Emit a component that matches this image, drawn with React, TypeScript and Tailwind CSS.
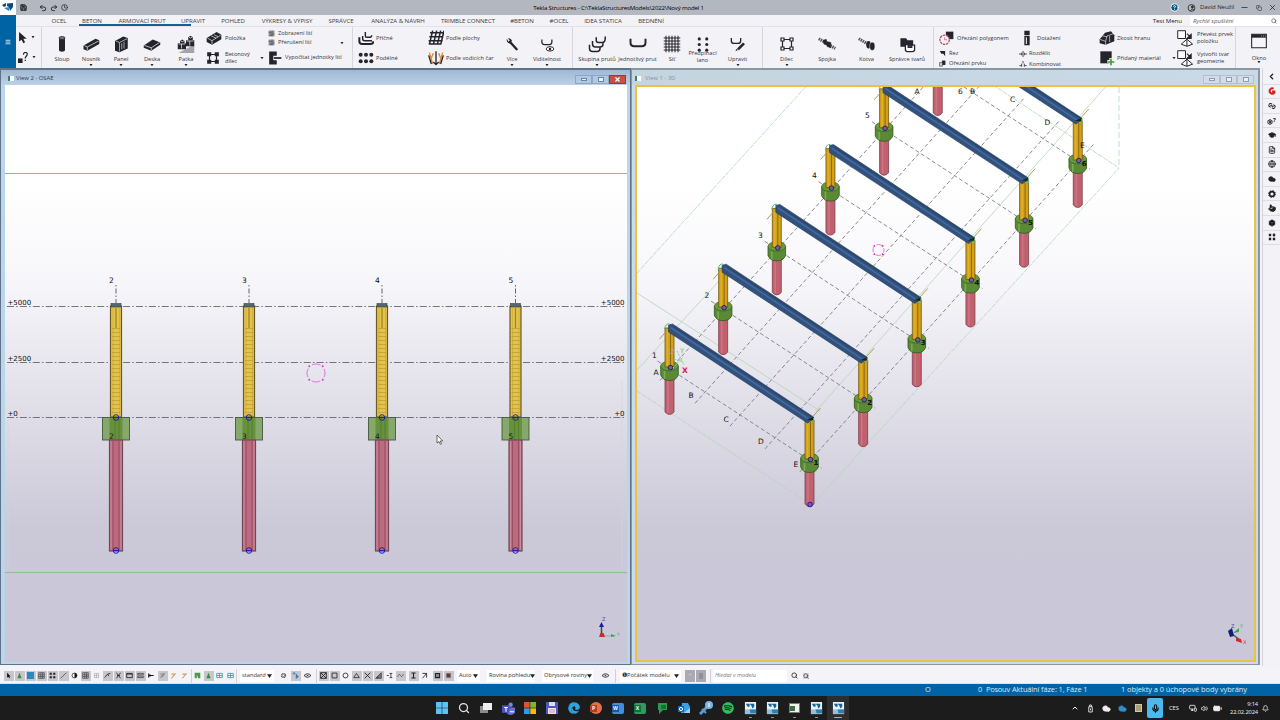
import React from 'react';
import {
    Save, Undo2, Redo2, Clock, HelpCircle, Minus, Copy, X, Search, Menu, ChevronLeft, GraduationCap,
    FileText, Globe, Cloud, Settings, Pointer, Box, ChevronUp, Mic, Volume2, Bell, Link2,
    Battery, MonitorSmartphone,
} from 'lucide-react';
import { FaSpotify, FaEdge } from 'react-icons/fa';

const K = '#24242c';

// Ribbon drawings, all on a 24x24 grid
const glyphs: Record<string, React.ReactNode> = {
    column: (
        <>
            <path d="M8 4v16c0 3 8 3 8 0V4z" fill={K} />
            <ellipse cx="12" cy="4" rx="4" ry="2" fill="#77777f" stroke={K} />
        </>
    ),
    beam: (
        <>
            <path d="M2 14 18 5l5 2v5L7 21l-5-2z" fill={K} />
            <path d="m3 14 4 2 15-8M7 16v4" stroke="#e8e8ee" fill="none" />
        </>
    ),
    panel: (
        <>
            <path d="M4 8 15 2l6 2v14L10 23l-6-2z" fill={K} />
            <path d="m5 8 5 2v12M10 10l10-5M13 11v8M16 9v9" stroke="#c8c8d0" fill="none" />
        </>
    ),
    slab: (
        <>
            <path d="M1 14 13 6l10 4v3l-12 8-10-4z" fill={K} />
            <path d="m2 14 9 3 11-7M11 17v3" stroke="#e8e8ee" fill="none" />
        </>
    ),
    footing: (
        <>
            <path d="M2 24h21V13l-6 3z" fill="#a3a3ab" />
            <path d="M1 11h3V8l3-2 3 2v3h2v8H1zM12 7h3V3l3-2 3 2v4h2v8H12z" fill={K} />
            <path d="M2 12h9M5 8l2 1 2-1M13 8h9M16 3l2 1 2-1M6 12v6M17 8v6" stroke="#e8e8ee" fill="none" />
        </>
    ),
    item: (
        <>
            <path d="M1 12 16 3l7 4v7L9 22l-8-4z" fill={K} />
            <path d="m2 12 7 4 13-8M9 16v5M8 9l7 3M12 7l6 3" stroke="#f0f0f4" fill="none" />
        </>
    ),
    assembly: (
        <>
            <path d="M6 6h12v12H6z" fill="none" stroke={K} strokeWidth="2" />
            <path d="M2 2h7v7H2zM15 2h7v7h-7zM2 15h7v7H2zM15 15h7v7h-7z" fill={K} />
        </>
    ),
    assemblyOpen: (
        <>
            <path d="M6 6h12v12H6z" fill="none" stroke={K} strokeWidth="1.6" />
            <path d="M4 4h4v4H4zM16 4h4v4h-4zM4 16h4v4H4zM16 16h4v4h-4z" fill="#fff" stroke={K} strokeWidth="1.6" />
        </>
    ),
    pour: (
        <>
            <path d="M2 2h20v20H2z" fill="#8f8f97" />
            <path d="M2 8h12M8 14h14M14 2v20M5 19h9" stroke="#55555d" strokeWidth="2" />
        </>
    ),
    calc: (
        <>
            <path d="M2 1h13v7H9v8h6v7H2z" fill={K} />
            <path d="M10 12h13" stroke={K} strokeWidth="3" />
        </>
    ),
    cross: (
        <>
            <path d="M2 11v6q0 4 4 4h13q4 0 4-4" fill="none" stroke={K} strokeWidth="3" />
            <path d="M7 9v4q0 3 3 3h11M11 3v6q0 2 2 2h6l2-3" fill="none" stroke={K} strokeWidth="2.2" />
        </>
    ),
    dots6: (
        <g fill={K}>
            {[4, 12, 20].map((x) => [7, 17].map((y) => <circle key={`${x}-${y}`} cx={x} cy={y} r="3" />))}
        </g>
    ),
    byFace: (
        <g stroke={K} strokeWidth="2.3" fill="none">
            <path d="M7 1 2 22M13 1 8 22M19 1l-5 21M24 1l-5 21M3 4h21M2 10h21M1 16h21M1 21h19" />
        </g>
    ),
    byGuide: (
        <>
            <path d="M2 4l5 17M22 4l-5 17M5 12l3-7M19 12l-3-7" fill="none" stroke="#e0892b" strokeWidth="2" />
            <path d="M1 8l4 13M23 8l-4 13M12 2v20M8 18l4 4 4-4" fill="none" stroke={K} strokeWidth="2" />
        </>
    ),
    wrench: (
        <>
            <path d="m9 9 11 12" stroke={K} strokeWidth="4" strokeLinecap="round" />
            <path d="M3 3q-1 7 5 8l4-4q-1-5-7-5l3 4-2 2z" fill={K} />
        </>
    ),
    visibility: (
        <>
            <path d="M3 4v4q0 4 4 4h8q4 0 4-4V4" fill="none" stroke={K} strokeWidth="2" />
            <ellipse cx="16" cy="19" rx="6" ry="3.5" fill="#fff" stroke={K} strokeWidth="1.6" />
            <circle cx="16" cy="19" r="2" fill={K} />
        </>
    ),
    rebarGroup: (
        <g fill="none" stroke={K} strokeWidth="2">
            <path d="M2 13v5q0 4 4 4h6q4 0 4-4v-2M6 8v4q0 4 4 4h6q4 0 4-4v-2M11 3v4q0 3 3 3h5q4 0 4-6v-2" />
        </g>
    ),
    rebar: <path d="M2 5v5q0 5 5 5h10q5 0 5-5V5" fill="none" stroke={K} strokeWidth="2.6" />,
    mesh: (
        <path d="M4 1v22M8 1v22M12 1v22M16 1v22M20 1v22M1 4h22M1 8h22M1 12h22M1 16h22M1 20h22" stroke={K} strokeWidth="1.4" />
    ),
    strand: (
        <g fill={K}>
            {[5, 17].map((x) => [3, 12, 21].map((y) => <circle key={`${x}-${y}`} cx={x + 1} cy={y} r="2.5" />))}
        </g>
    ),
    edit: (
        <>
            <path d="M2 3v4q0 4 4 4h6q4 0 4-4V3" fill="none" stroke={K} strokeWidth="2" />
            <path d="m12 20 9-9" stroke={K} strokeWidth="4" />
            <path d="m8 23 2-4 2 2z" fill={K} />
        </>
    ),
    coupler: (
        <>
            <path d="M1 5l22 13" stroke="#55555d" strokeWidth="4" strokeDasharray="2 1" />
            <path d="m7 7 4-1 1 7-4-1zM12 9l5 1v7l-5-2z" fill={K} stroke={K} />
        </>
    ),
    anchor: (
        <>
            <path d="M1 5l14 8" stroke="#55555d" strokeWidth="4" strokeDasharray="2 1" />
            <ellipse cx="14" cy="13" rx="3" ry="5" fill={K} />
            <ellipse cx="19" cy="15" rx="3.5" ry="5.5" fill={K} stroke="#e8e8ee" strokeWidth=".6" />
        </>
    ),
    shapes: (
        <>
            <path d="M2 3h8l2 3h8v9H2z" fill={K} />
            <path d="M9 12v7q0 3 3 3h7q3 0 3-3v-6h-4v3h-5v-4z" fill="#fff" stroke={K} strokeWidth="1.8" />
        </>
    ),
    polyCut: (
        <>
            <path d="M11 1h12v12H11z" fill={K} />
            <circle cx="9" cy="14" r="7.5" fill="#f3f2f7" stroke="#b54a55" strokeWidth="2" strokeDasharray="4 1.2" />
            <path d="M9 14v-4M9 14h4" stroke="#b54a55" />
        </>
    ),
    cut: <path d="M3 3h18v18l-6-8H8z" fill={K} />,
    partCut: (
        <>
            <path d="M10 2h12v15H10z" fill={K} />
            <path d="M2 9h10v12H2z" fill="#d5d5db" stroke={K} strokeWidth="2" />
        </>
    ),
    fitting: (
        <>
            <path d="M8 1h8v7H8zM8 9h8v14H8z" fill={K} />
            <path d="M11 11v10" stroke="#fff" strokeWidth="1.5" />
        </>
    ),
    split: <path d="M0 12h8M16 12h8M12 3v18M8 8v8M16 8v8" fill="none" stroke={K} strokeWidth="2.4" />,
    combine: <path d="M1 17h7M16 17h7M12 3v7M8 11v9M16 11v9" fill="none" stroke={K} strokeWidth="2.4" />,
    chamfer: (
        <>
            <path d="M1 14 9 4l9-2 5 6v9L10 22l-9-2z" fill={K} />
            <path d="m1 14 9 3 2-8 11-4M10 17v5M5 9l7 1M16 9v9" stroke="#e8e8ee" fill="none" />
        </>
    ),
    addMat: (
        <>
            <path d="M2 2h17v18H2z" fill={K} />
            <path d="M18 12v11M12.500 17.500h11" stroke="#f3f2f7" strokeWidth="5" />
            <path d="M18 13v10M13 18h10" stroke="#4e9a3b" strokeWidth="2.600" />
        </>
    ),
    convert: (
        <>
            <path d="M1 1h11v11H1z" fill="#fff" stroke={K} strokeWidth="1.4" />
            <path d="m14 5 5 5M20 6v6h-6z" fill={K} stroke={K} strokeWidth="1.5" />
            <path d="M14 13 6 20l8 3 8-3zM14 13v10" fill="#fff" stroke={K} strokeWidth="1.4" />
        </>
    ),
    window: (
        <>
            <path d="M1 2h22v20H1z" fill="#f6f6fa" stroke={K} strokeWidth="1.6" />
            <path d="M1 2h22v5H1z" fill={K} />
            <path d="M15 4.500h1M18 4.500h1M21 4.500h1" stroke="#fff" strokeWidth="1.2" />
        </>
    ),
};

const Glyph = ({ name, className }: { name: string; className: string }) => (
    <svg viewBox="0 0 24 24" className={`shrink-0 ${className}`}>{glyphs[name]}</svg>
);

const Caret = () => (
    <svg viewBox="0 0 4 3" className="w-[4px] h-[3px] shrink-0"><path d="M.5 0h3L2 2.200z" fill="#222" /></svg>
);

const Big = ({ icon, label, w, caret, size = 'w-[18px] h-[18px]' }: {
    icon: string; label: React.ReactNode; w: string; caret?: boolean; size?: string;
}) => (
    <div className={`${w} shrink-0 flex flex-col items-center pt-[7px]`}>
        <div className="h-[20px] flex items-center"><Glyph name={icon} className={size} /></div>
        <div className="h-[11px] flex items-center leading-[6.500px] text-center whitespace-nowrap">{label}</div>
        {caret && <div className="-mt-[1.500px]"><Caret /></div>}
    </div>
);

const Small = ({ icon, label, h = 'h-[20px]', size = 'w-[16px] h-[16px]', gap = 'gap-[3px]' }: {
    icon: string; label: React.ReactNode; h?: string; size?: string; gap?: string;
}) => (
    <div className={`${h} ${gap} flex items-center leading-[7px] whitespace-nowrap`}>
        <Glyph name={icon} className={size} />
        <span>{label}</span>
    </div>
);

const tabs = [
    { label: 'OCEL', w: 'w-[28px]' },
    { label: 'BETON', w: 'w-[38px]' },
    { label: 'ARMOVACÍ PRUT', w: 'w-[62px]' },
    { label: 'UPRAVIT', w: 'w-[40px]' },
    { label: 'POHLED', w: 'w-[40px]' },
    { label: 'VÝKRESY & VÝPISY', w: 'w-[68px]' },
    { label: 'SPRÁVCE', w: 'w-[40px]' },
    { label: 'ANALÝZA & NÁVRH', w: 'w-[74px]' },
    { label: 'TRIMBLE CONNECT', w: 'w-[66px]' },
    { label: '#BETON', w: 'w-[42px]' },
    { label: '#OCEL', w: 'w-[32px]' },
    { label: 'IDEA STATICA', w: 'w-[56px]' },
    { label: 'BEDNĚNÍ', w: 'w-[40px]' },
];

const TeklaLogo = ({ className }: { className: string }) => (
    <svg viewBox="0 0 16 15" className={className}>
        <path d="M2 5 6 3v3L4 7zM7 3.500 13 3v4l-3 4-1-4-2-1z" fill="#0b4c7c" />
        <path d="m4 8 5-1v4z" fill="#2c86c1" />
    </svg>
);

const TitleBar = () => (
    <div className="h-[15px] flex items-center bg-[#b3b7c0] text-[#25262b]">
        <div className="w-[16px] h-[15px] bg-white"><TeklaLogo className="w-[16px] h-[15px]" /></div>
        <Save className="w-[7px] h-[7px] ml-[4px]" strokeWidth={4} />
        <Undo2 className="w-[8px] h-[8px] ml-[12px]" strokeWidth={2.8} />
        <Redo2 className="w-[8px] h-[8px] ml-[3px]" strokeWidth={2.8} />
        <Clock className="w-[7px] h-[7px] ml-[3px]" strokeWidth={2.5} />
        <div className="flex-1 flex justify-center pr-[1px] text-[6.100px] tracking-[-0.170px] whitespace-nowrap text-black">
            Tekla Structures - C:\TeklaStructuresModels\2022\Nový model 1
        </div>
        <HelpCircle className="w-[9px] h-[9px] text-white" fill="#0a5a86" strokeWidth={2.5} />
        <svg viewBox="0 0 10 10" className="w-[9px] h-[9px] ml-[8px]">
            <circle cx="5" cy="5.500" r="3.800" fill="none" stroke="#333" />
            <circle cx="6" cy="4.500" r="1.600" fill="#333" /><path d="M4 9q1-4 4 -1" stroke="#333" fill="none" />
        </svg>
        <span className="ml-[4px] w-[39px] text-[6px] tracking-[-0.050px] whitespace-nowrap">David Neužil</span>
        <Minus className="w-[9px] h-[9px] ml-[1px]" strokeWidth={2} />
        <Copy className="w-[6px] h-[6px] ml-[7px]" strokeWidth={2} />
        <X className="w-[9px] h-[9px] ml-[6px] mr-[3px]" strokeWidth={2} />
    </div>
);

const TabRow = () => (
    <div className="h-[12px] flex items-start text-[6.100px] text-[#3c3d44] tracking-[-0.050px] border-b border-[#e2e2e8]">
        <div className="flex ml-[29px]">
            {tabs.map((t) => (
                <div key={t.label} className={`${t.w} h-[11px] flex items-center justify-center whitespace-nowrap`}>{t.label}</div>
            ))}
        </div>
        <div className="absolute left-[79px] top-[24px] w-[112px] h-[2px] bg-[#0d6496]" />
        <div className="ml-auto mr-[8px] h-[11px] flex items-center text-[#222]">Test Menu</div>
        <div className="w-[90px] h-[11px] bg-white flex items-center justify-between px-[3px] italic text-[#666] text-[6.100px]">
            Rychlé spuštění <Search className="w-[6px] h-[6px]" strokeWidth={3} />
        </div>
    </div>
);

const Group = ({ w, children }: { w: string; children: React.ReactNode }) => (
    <div className={`${w} shrink-0 flex border-r border-[#d6d6dd]`}>{children}</div>
);

const Ribbon = () => (
    <div className="h-[41px] flex text-[5.700px] text-[#33343c]">
        <Group w="w-[26px]">
            <div className="w-[25px] pl-[2px]">
                <div className="h-[21px] flex items-center gap-[4px]">
                    <svg viewBox="0 0 10 14" className="w-[9px] h-[12px]"><path d="M1 0v11l3-2 2 4 2-1-2-4h4z" fill="#222" /></svg><Caret />
                </div>
                <div className="h-[19px] flex items-center gap-[3px]">
                    <svg viewBox="0 0 12 12" className="w-[11px] h-[11px]">
                        <path d="M0 7h5v5H0z" fill="#222" />
                        <path d="M6 3q0-3 2.500-2.500T9.500 4L8 6v1M8 8.500v1.200" fill="none" stroke="#222" strokeWidth="1.300" />
                    </svg>
                    <Caret />
                </div>
            </div>
        </Group>
        <Group w="w-[311px]">
            <Big icon="column" label="Sloup" w="w-[40px]" size="w-[18px] h-[18px]" />
            <Big icon="beam" label="Nosník" w="w-[18px]" caret />
            <div className="w-[5px]" />
            <Big icon="panel" label="Panel" w="w-[32px]" caret />
            <Big icon="slab" label="Deska" w="w-[30px]" caret />
            <Big icon="footing" label="Patka" w="w-[38px]" caret />
            <div className="w-[54px] shrink-0 pt-[1px] pl-[1px]">
                <Small icon="item" label="Položka" />
                <Small icon="assembly" label={<>Betonový<br />dílec</>} size="w-[14px] h-[14px]" gap="gap-[5px]" />
            </div>
            <div className="pt-[36px] w-[6px] -mt-[6px] pl-[1px]"><Caret /></div>
            <div className="pt-[2px] pl-[3px]">
                <Small icon="pour" label="Zobrazení lití" h="h-[9px]" size="w-[7px] h-[7px]" />
                <Small icon="pour" label="Přerušení lití" h="h-[9px]" size="w-[7px] h-[7px]" />
                <Small icon="calc" label="Vypočítat jednotky lití" h="h-[21px]" size="w-[14px] h-[14px]" />
            </div>
            <div className="pt-[15px] -ml-[2px]"><Caret /></div>
        </Group>
        <Group w="w-[220px]">
            <div className="w-[70px] pt-[1px] pl-[5px]">
                <Small icon="cross" label="Příčné" gap="gap-[2px]" />
                <Small icon="dots6" label="Podélné" gap="gap-[2px]" />
            </div>
            <div className="w-[70px] pt-[1px] pl-[5px]">
                <Small icon="byFace" label="Podle plochy" gap="gap-[2px]" />
                <Small icon="byGuide" label="Podle vodicích čar" gap="gap-[2px]" />
            </div>
            <Big icon="wrench" label="Více" w="w-[38px]" caret size="w-[14px] h-[14px]" />
            <Big icon="visibility" label="Viditelnost" w="w-[32px]" caret size="w-[15px] h-[15px]" />
        </Group>
        <Group w="w-[190px]">
            <Big icon="rebarGroup" label="Skupina prutů" w="w-[48px]" caret />
            <Big icon="rebar" label="Jednotlivý prut" w="w-[33px]" />
            <Big icon="mesh" label="Síť" w="w-[36px]" />
            <Big icon="strand" label={<span className="-mt-[6px]">Předpínací<br />lano</span>} w="w-[25px]" size="w-[16px] h-[15px]" />
            <Big icon="edit" label="Upravit" w="w-[45px]" caret size="w-[16px] h-[16px]" />
        </Group>
        <Group w="w-[171px]">
            <Big icon="assemblyOpen" label="Dílec" w="w-[47px]" caret size="w-[18px] h-[18px]" />
            <Big icon="coupler" label="Spojka" w="w-[34px]" />
            <Big icon="anchor" label="Kotva" w="w-[45px]" />
            <Big icon="shapes" label="Správce tvarů" w="w-[36px]" size="w-[17px] h-[17px]" />
        </Group>
        <Group w="w-[302px]">
            <div className="w-[79px] pt-[1px] pl-[5px]">
                <Small icon="polyCut" label="Ořezání polygonem" size="w-[15px] h-[15px]" />
                <Small icon="cut" label="Řez" h="h-[10px]" size="w-[7px] h-[7px]" />
                <Small icon="partCut" label="Ořezání prvku" h="h-[11px]" size="w-[7px] h-[7px]" />
            </div>
            <div className="w-[85px] pt-[1px] pl-[6px]">
                <Small icon="fitting" label="Dotažení" size="w-[16px] h-[16px]" gap="gap-[2px]" />
                <Small icon="split" label="Rozdělit" h="h-[11px]" size="w-[8px] h-[8px]" gap="gap-[2px]" />
                <Small icon="combine" label="Kombinovat" h="h-[10px]" size="w-[8px] h-[8px]" gap="gap-[2px]" />
            </div>
            <div className="w-[74px] pt-[1px] pl-[1px]">
                <Small icon="chamfer" label="Zkosit hranu" size="w-[16px] h-[16px]" gap="gap-[2px]" />
                <Small icon="addMat" label="Přidaný materiál" size="w-[16px] h-[16px]" gap="gap-[2px]" />
            </div>
            <div className="w-[5px] pt-[30px]"><Caret /></div>
            <div className="pt-[1px]">
                <Small icon="convert" label={<>Převést prvek<br />položku</>} size="w-[17px] h-[17px]" />
                <Small icon="convert" label={<>Vytvořit tvar<br />geometrie</>} size="w-[17px] h-[17px]" />
            </div>
        </Group>
        <div className="flex -mt-[3px]"><Big icon="window" label={<span className="mt-[4px]">Okno</span>} w="w-[46px]" caret size="w-[18px] h-[16px]" /></div>
    </div>
);

const WinButtons = ({ active }: { active?: boolean }) => {
    const box = 'w-[17px] h-[9px] border flex items-center justify-center';
    const plain = active ? 'border-[#8ba8c6] bg-[#b0c8e1] text-[#6a86a3]' : 'border-[#b3c1cf] bg-[#d0dce7] text-[#8d9dad]';
    return (
        <div className="flex mt-[2px]">
            <div className={`${box} ${plain}`}><div className="w-[6px] h-[3px] border border-current bg-[#e8f0f8]" /></div>
            <div className={`${box} ${plain}`}><div className="w-[6px] h-[5px] border border-current bg-[#e8f0f8]" /></div>
            <div className={`${box} ${active ? 'border-[#8c4038] bg-[#c9503f] text-white' : plain}`}>
                {active ? <X className="w-[7px] h-[7px]" strokeWidth={4} /> : <div className="w-[6px] h-[5px] border border-current bg-[#e8f0f8]" />}
            </div>
        </div>
    );
};

// Four arcs with a dot in each gap
const Snap = ({ x, y, r }: { x: number; y: number; r: number }) => (
    <g fill="none" stroke="#e055d8">
        <circle cx={x} cy={y} r={r} strokeWidth=".8" strokeDasharray={`${r} ${r * 0.5708}`} strokeDashoffset={r * 0.5} />
        {[[-1, -1], [1, -1], [-1, 1], [1, 1]].map(([a, b]) => (
            <circle key={`${a}${b}`} cx={x + a * r * 0.75} cy={y + b * r * 0.75} r=".9" fill="#c92fbe" stroke="none" />
        ))}
    </g>
);

const Handle = ({ x, y, r = 2.8 }: { x: number; y: number; r?: number }) => (
    <g fill="none" stroke="#2020b0" strokeWidth="1">
        <circle cx={x} cy={y} r={r} /><path d={`M${x - r} ${y}h${r * 2}`} />
    </g>
);

const sectionCols = [
    { id: '2', x: 116 },
    { id: '3', x: 249 },
    { id: '4', x: 382 },
    { id: '5', x: 515.5 },
];

const levels = [
    { label: '+5000', y: 306.5 },
    { label: '+2500', y: 362.5 },
    { label: '+0', y: 417.5 },
];

const Backdrop = ({ id }: { id: string }) => (
    <linearGradient id={id} x1="0" y1="0" x2="0" y2="1">
        <stop offset="0.18" stopColor="#ffffff" />
        <stop offset="0.35" stopColor="#f6f5f9" />
        <stop offset="0.55" stopColor="#e1dfe8" />
        <stop offset="0.77" stopColor="#cbc9d8" />
        <stop offset="1" stopColor="#cac8d8" />
    </linearGradient>
);

const SectionView = () => (
    <svg viewBox="5 85 622 577" className="block w-[622px] h-[577px] font-['DejaVu_Sans']">
        <defs><Backdrop id="bgSection" /></defs>
        <rect x="5" y="85" width="622" height="577" fill="url(#bgSection)" />
        <path d="M5 173.500h622M5 572.500h622" stroke="#8fbc95" strokeWidth="1" />
        <path d="M8 420v150M399 425v20M622 380v190" stroke="#d5d5e0" strokeWidth=".6" />
        {levels.map((l) => (
            <g key={l.label}>
                <path d={`M7 ${l.y}H626`} stroke="#66656f" strokeWidth=".9" strokeDasharray="7 2.200 1.500 2.200" />
                <text x="7.500" y={l.y - 1.6} fontSize="7" fill="#111">{l.label}</text>
                <text x="624.500" y={l.y - 1.6} fontSize="7" fill="#111" textAnchor="end">{l.label}</text>
            </g>
        ))}
        {sectionCols.map(({ id, x }) => (
            <g key={id}>
                <text x={x - 7} y="283" fontSize="7.500" fill="#111">{id}</text>
                <path d={`M${x} 285v18`} stroke="#555" strokeWidth=".9" strokeDasharray="1.500 2 5 2" />
                <rect x={x - 5.500} y="306" width="11" height="111" fill="#e2c34e" stroke="#6b5b23" strokeWidth="1.200" />
                <path d={`M${x - 3} 308V416M${x + 3.500} 308V416`} stroke="#cda936" strokeWidth=".7" />
                <path d={`M${x} 308v20`} stroke="#a08022" strokeWidth="1.200" />
                <path d={`M${x} 328V416`} stroke="#b18f2b" strokeWidth="8" strokeDasharray=".7 3.300" opacity=".7" />
                <rect x={x - 5} y="303.500" width="10" height="3.500" fill="#566670" stroke="#333f47" strokeWidth=".6" />
                <rect x={x - 13.500} y="417.500" width="27" height="22.500" fill="#86a86a" stroke="#45593f" strokeWidth=".9" />
                <rect x={x - 6.500} y="418" width="13" height="22" fill="#68913f" />
                <path d={`M${x - 1} 418v22M${x + 3} 418v22`} stroke="#4f7a2b" strokeWidth=".8" />
                <text x={x - 7} y="438.500" fontSize="7.500" fill="#13220a">{id}</text>
                <rect x={x - 6.500} y="440" width="13" height="111" fill="#bb6b80" stroke="#704853" strokeWidth="1.200" />
                <path d={`M${x - 3} 441V550M${x + 3} 441V550`} stroke="#93495f" strokeWidth=".9" />
                <path d={`M${x - 5} 441V550M${x + 5} 441V550`} stroke="#cf8a9b" strokeWidth="1" />
                <Handle x={x} y={417.5} />
                <Handle x={x} y={550.5} />
            </g>
        ))}
        <Snap x={316} y={373} r={9} />
        <path d="M437 435v8l2-1.500 1.300 2.800 1.200-.6-1.300-2.700h2.500z" fill="#fff" stroke="#333" strokeWidth=".7" />
        <path d="M601.500 636V626" stroke="#444" strokeWidth="1.500" /><path d="M599 627l2.500-5 2.500 5z" fill="#1a1aa8" />
        <path d="M601 636h11" stroke="#7b9" /><path d="m611 634 5 2-5 1z" fill="#35a845" />
        <path d="M599 637l1.500-4h3l1.500 4z" fill="#d12828" />
        <text x="602" y="621" fontSize="5" fill="#4646a0">Z</text>
        <text x="617" y="636" fontSize="4.500" fill="#62a86c">Y</text>
    </svg>
);

// Frames of the 3D model: top of the left column, back to front
const STEP_X = 53.65;
const STEP_Y = -59.8;
const frames = [5, 4, 3, 2, 1, 0].map((i) => ({ n: i + 1, x: 669.5 + i * STEP_X, y: 328 + i * STEP_Y }));

const Pile = ({ x, y }: { x: number; y: number }) => (
    <g>
        <path d={`M${x - 4.500} ${y + 48}V${y + 84}q4.500 5 9 0V${y + 48}z`} fill="#c0616f" stroke="#7d3f4a" strokeWidth=".8" />
        <path d={`M${x - 1.500} ${y + 52}v33`} stroke="#cd7582" strokeWidth="1.500" />
        <path d={`M${x - 8.800} ${y + 38}v9q2 5.500 8.800 5.500t8.800-5.500v-9z`} fill="#5a8a34" stroke="#33561d" strokeWidth=".8" />
        <ellipse cx={x} cy={y + 38} rx="8.800" ry="4.800" fill="#689a40" stroke="#3a6222" strokeWidth=".7" />
        <path d={`M${x - 5} ${y + 43}v8`} stroke="#7bab54" strokeWidth="1.500" />
        <path d={`M${x - 4.500} ${y}h9V${y + 39}h-9z`} fill="#d3a017" stroke="#6f5710" strokeWidth=".8" />
        <path d={`M${x + 1} ${y + 2}V${y + 39}`} stroke="#8a6a10" strokeWidth="1" />
        <path d={`M${x - 2} ${y + 2}V${y + 38}`} stroke="#dfb02a" strokeWidth="1.500" />
        <circle cx={x + 1} cy={y + 39.500} r="2.300" fill="#6d6390" stroke="#241c62" strokeWidth=".9" />
    </g>
);

const modelLabels: [string, number, number][] = [
    ['A', 914.500, 93.500], ['6', 958, 93.500], ['B', 970, 93.500], ['C', 1010, 101.500], ['D', 1044.500, 124.500], ['E', 1080, 148],
    ['5', 865, 118], ['4', 812, 178], ['3', 758, 238], ['2', 704.500, 298], ['1', 652, 357.500],
    ['A', 653.500, 375], ['B', 688.500, 398], ['C', 723.500, 421.500], ['D', 758, 443.500], ['E', 793.500, 466.500],
];

const ModelView = () => (
    <svg viewBox="637 87 617 573" className="block w-[617px] h-[573px] font-['DejaVu_Sans']">
        <defs><Backdrop id="bgModel" /></defs>
        <rect x="637" y="87" width="617" height="573" fill="url(#bgModel)" />
        <g stroke="#b4d6b8" strokeWidth=".8" fill="none">
            <path d="M637 273 810 82M637 391 810 504M810 507 1119 168M993 85l126 83" strokeDasharray="5 1" />
            <path d="M637 293 820 411M816 411 1110 82" />
            <path d="M1119 87v81" strokeDasharray="6 3" />
            <path d="M637 370 720 280" />
        </g>
        <g stroke="#7d7c88" strokeWidth=".9" strokeDasharray="4 2.500" fill="none">
            {[0, 1, 2, 3, 4].map((k) => (
                <path key={k} d={`M${660 + k * 35} ${380.500 + k * 22.800}l295 -329`} />
            ))}
            {frames.map((f) => (
                <path key={f.n} d={`M${f.x - 12} ${f.y + 33}L${f.x + 152} ${f.y + 140}`} />
            ))}
        </g>
        {frames.map((f) => (
            <g key={f.n}>
                <Pile x={f.x} y={f.y} />
                <Pile x={f.x + 140} y={f.y + 92} />
                <path d={`M${f.x - 10} ${f.y + 11}l8-9M${f.x + 142} ${f.y + 90}l9-10`} stroke="#b0a14a" strokeWidth="1" />
                <path d={`M${f.x - 1} ${f.y - 3}l4-1L${f.x + 144} ${f.y + 89}l0 2-6 4L${f.x - 1} ${f.y + 4}z`} fill="#31527f" stroke="#22395a" strokeWidth=".6" />
                <path d={`M${f.x + 1} ${f.y - 0.5}L${f.x + 139} ${f.y + 91}`} stroke="#456a9c" strokeWidth="1.500" />
                <path d={`M${f.x + 4} ${f.y - 1.5}L${f.x + 143} ${f.y + 89.5}`} stroke="#22395a" strokeWidth=".7" />
                <path d={`M${f.x + 137} ${f.y + 92}l7-3v3z`} fill="#15241a" />
                <path d={`M${f.x - 5} ${f.y + 1}q1-6 5-5M${f.x + 142} ${f.y + 96}q4-2 2-6`} stroke="#57b877" strokeWidth="1" fill="none" />
                <text x={f.x + 144} y={f.y + 136.500} fontSize="7" fontWeight="bold" fill="#111">{f.n}</text>
            </g>
        ))}
        {modelLabels.map(([t, x, y]) => (
            <text key={`${t}${x}`} x={x} y={y} fontSize="7.500" fill="#111">{t}</text>
        ))}
        <circle cx="810" cy="504.500" r="2.200" fill="#8f5a9c" stroke="#2b1fc0" strokeWidth="1.100" />
        <text x="682" y="372.500" fontSize="7.500" fontWeight="bold" fill="#d31f4b">X</text>
        <text x="680" y="353" fontSize="6.500" fill="#6fbf7f">Y</text>
        <text x="670" y="354" fontSize="6.500" fill="#c99aac">Z</text>
        <path d="m673 368 10-11m-6-6 7 14m-10-6 9 3" stroke="#7fcf8b" strokeWidth=".9" strokeDasharray="2 1" />
        <Snap x={878.5} y={250} r={5.5} />
        <path d="m1232 634 8 6" stroke="#555" strokeWidth="1.500" />
        <path d="m1236 638 5 1 1 4-6-2z" fill="#d12828" /><path d="m1233 633 6-5 0 4z" fill="#35a845" /><path d="m1228 631 4-3 2 8-4 1z" fill="#1a1a7c" />
        <text x="1243" y="644" fontSize="5" fill="#c33">X</text>
        <text x="1240" y="628" fontSize="5" fill="#5aa864">Y</text>
        <text x="1231" y="628" fontSize="5" fill="#4646a0">Z</text>
    </svg>
);

const FileDot = () => <div className="w-[6px] h-[5px] bg-white border-l-2 border-[#3f7f6a]" />;

const Workspace = () => (
    <div className="h-[598px] flex bg-[#f3f2f7] text-[5.900px]">
        <div className="w-[631px] h-[597px] border-t-2 border-l border-r border-b border-[#5f7386] bg-[#bbd5ec] flex flex-col">
            <div className="h-[15px] flex items-center pl-[7px] pr-[4px] pt-[2px] bg-linear-to-b from-[#9fb8d5] to-[#bdd1e8] text-[#2b3b4b]">
                <FileDot />
                <span className="ml-[2px] flex-1">View 2 - OSAE</span>
                <WinButtons active />
            </div>
            <div className="pl-[4px]"><SectionView /></div>
        </div>
        <div className="w-[629px] h-[597px] border-t-2 border-l border-r-2 border-b border-[#8797a3] bg-[#ccdbe7] flex flex-col">
            <div className="h-[15px] flex items-center pl-[3px] pr-[4px] pt-[2px] bg-linear-to-r from-[#c4d5e0] to-[#c9dae6] text-[#8494a2]">
                <FileDot />
                <span className="ml-[4px] flex-1">View 1 - 3D</span>
                <WinButtons />
            </div>
            <div className="ml-[3px] w-[621px] border-2 border-[#e8c440]"><ModelView /></div>
        </div>
        <SidePanel />
    </div>
);

const sideIcons = [
    <ChevronLeft className="w-[9px] h-[9px]" strokeWidth={3.5} />,
    <svg viewBox="0 0 10 10" className="w-[8px] h-[8px]"><path d="M7 2A3.300 3.300 0 1 0 8 7V5.500H5" fill="none" stroke="#d02020" strokeWidth="2.500" /></svg>,
    <Link2 className="w-[8px] h-[8px] rotate-[25deg]" strokeWidth={3} />,
    <span className="flex items-start"><Settings className="w-[6px] h-[6px] mt-[2px]" strokeWidth={4} /><b className="text-[6px] leading-[6px]">?</b></span>,
    <GraduationCap className="w-[8px] h-[8px]" fill="#222" strokeWidth={2.5} />,
    <FileText className="w-[8px] h-[8px]" strokeWidth={2.5} />,
    <Globe className="w-[8px] h-[8px]" strokeWidth={2.5} />,
    <Cloud className="w-[8px] h-[8px]" fill="#222" />,
    <svg viewBox="0 0 10 10" className="w-[8px] h-[8px]"><circle cx="5" cy="5" r="3" fill="none" stroke="#222" strokeWidth="2" /><circle cx="5" cy="5" r="4.300" fill="none" stroke="#222" strokeWidth="1.200" strokeDasharray="1.700 1.680" /></svg>,
    <Pointer className="w-[8px] h-[8px]" fill="#222" />,
    <Box className="w-[8px] h-[8px] text-[#777]" fill="#111" strokeWidth={1.5} />,
    <svg viewBox="0 0 10 10" className="w-[8px] h-[8px]"><path d="M1 1h3v3H1zM1 6h3v3H1zM6 6h3v3H6zM7.500 0 9.500 2.500 7.500 5 5.500 2.500z" fill="#222" /></svg>,
];

const SidePanel = () => (
    <div className="w-[18px] ml-[2px] h-[598px] border-l border-[#d3d3da] flex flex-col pt-[2px] text-[#222]">
        {sideIcons.map((icon, i) => (
            <div key={i} className="h-[14.600px] border-b border-[#dddde3] flex items-center justify-center">{icon}</div>
        ))}
    </div>
);

// Small snap/selection switches on a 10x10 grid
const mini: Record<string, React.ReactNode> = {
    arrow: <path d="M3 1v7l2-1 1 2 1-.5-1-2h2z" fill="#111" />,
    tree: <path d="M5 1 8 9H2z" fill="#3f8a3a" />,
    blue: <path d="M0 0h10v10H0z" fill="#2a88c4" />,
    grid: <path d="M1 1h8v8H1zM4 1v8M6.500 1v8M1 4h8M1 6.500h8" fill="none" stroke="#444" />,
    four: <path d="M1 1h3v3H1zM6 1h3v3H6zM1 6h3v3H1zM6 6h3v3H6z" fill="#222" />,
    line: <path d="M1 9 9 1" stroke="#444" />,
    ball: <><circle cx="5" cy="5" r="3.500" fill="#fff" stroke="#111" /><path d="M5 1.500a3.500 3.500 0 0 1 0 7z" fill="#111" /></>,
    light: <path d="M2 2h6v6H2zM5 2v6M2 5h6" fill="none" stroke="#aaa" />,
    peak: <path d="M1 8 5 3l2 3M5 3l4-1" fill="none" stroke="#333" strokeWidth="1.300" />,
    pick: <path d="M1 2h4M3 0v4M6 3v6l3-2z" fill="#2a78b4" stroke="#2a78b4" />,
    scissors: <path d="M2 1l6 8M8 1 2 9M3 5h4" stroke="#222" strokeWidth="1.200" />,
    win: <path d="M1 2h8v6H1zM1 3h8" fill="none" stroke="#222" strokeWidth="1.200" />,
    rows: <path d="M1 2h8v2H1zM1 6h8v2H1z" fill="#fff" stroke="#222" />,
    tack: <path d="M1 2v6M1 5h7M3 3.500v3" stroke="#111" strokeWidth="1.600" />,
    pen: <path d="M2 8 8 1M2 3h4M4 8l4-5" stroke="#777" strokeWidth="1.200" />,
    penO: <path d="M2 9 8 2M2 3h5" stroke="#e0a040" strokeWidth="1.500" />,
    penR: <path d="M2 9 8 2M2 3h5" stroke="#d07040" strokeWidth="1.300" />,
    leaf: <path d="M1 1h8v8H6L4 4v5H1z" fill="#4a9a45" />,
    cyan: <path d="M1 2h8v6H1zM1 5h8M5 2v6" fill="none" stroke="#3fa0d0" strokeWidth="1.300" />,
    gear: <circle cx="5" cy="5" r="2.500" fill="none" stroke="#555" strokeWidth="2.500" strokeDasharray="1.300 .5" />,
    eye: <path d="M0 5q5-5 10 0-5 5-10 0zM4 5h2" fill="#ddd" stroke="#222" strokeWidth="1.200" />,
    xbox: <path d="M1 1h8v8H1zM1 1l8 8M9 1 1 9" fill="none" stroke="#222" strokeWidth="1.300" />,
    box: <path d="M1.500 1.500h7v7h-7z" fill="none" stroke="#333" strokeWidth="1.300" />,
    circle: <circle cx="5" cy="5" r="3.500" fill="none" stroke="#222" strokeWidth="1.200" />,
    tri: <path d="M5 2 9 8H1z" fill="none" stroke="#333" strokeWidth="1.200" />,
    x: <path d="m1 1 8 8M9 1 1 9" stroke="#222" strokeWidth="1.200" />,
    stair: <path d="M1 9h8V1zM4 9V6" fill="#777" stroke="#333" />,
    ibar: <path d="M1 5h3M5 2h4M7 2v6M5 8h4" stroke="#333" strokeWidth="1.200" />,
    wave: <path d="M1 7q2-6 4-2t4-2" fill="none" stroke="#444" />,
    beam: <path d="M2 1.500h6M5 1.500v7M2 8.500h6" stroke="#222" strokeWidth="1.600" />,
    out: <path d="M2 9 8 2M2 2h6v6" fill="none" stroke="#222" strokeWidth="1.200" />,
    sq: <path d="M2 2h6v6H2z" fill="#888" stroke="#222" strokeWidth="1.500" />,
    sqr: <path d="M2 2h6v6H2z" fill="#444" stroke="#a07070" strokeWidth="1" />,
};

const Mini = ({ n, on }: { n: string; on?: boolean }) => (
    <div className="w-[11px] h-[11px] shrink-0 flex items-center justify-center">
        <div className={`w-[10px] h-[10px] flex items-center justify-center ${on ? 'bg-[#c6c6cc]' : ''}`}>
            <svg viewBox="0 0 10 10" className="w-[7px] h-[7px]">{mini[n]}</svg>
        </div>
    </div>
);

const minis = (names: string) => names.split(' ').map((n, i) => (
    <Mini key={i} n={n.replace('!', '')} on={n.endsWith('!')} />
));

const Combo = ({ w, children }: { w: string; children: React.ReactNode }) => (
    <div className={`${w} h-[12px] shrink-0 bg-white flex items-center justify-between whitespace-nowrap px-[2px]`}>
        {children}<svg viewBox="0 0 4 3" className="w-[5px] h-[4px] shrink-0"><path d="M0 0h4L2 3z" fill="#222" /></svg>
    </div>
);

const Divider = ({ cls }: { cls: string }) => <div className={`h-[14px] w-px shrink-0 bg-[#d0d0d8] ${cls}`} />;

const SnapBar = () => (
    <div className="h-[18px] flex items-center bg-[#f4f3f8] border-b border-[#dfdfe6] text-[5.700px] text-[#333] pl-[3px] pt-[2px]">
        {minis('arrow! tree! blue! grid! four! line! ball grid! light peak! scissors! win! rows! tack pen! penO penR')}
        <Divider cls="ml-[1px]" />
        {minis('leaf tree! cyan cyan')}
        <Divider cls="" />
        <Combo w="w-[34px] ml-[3px] mr-[4px]">standard</Combo>
        <Mini n="gear" />
        <div className="flex ml-px"><Mini n="pick" on /></div>
        <div className="flex ml-px"><Mini n="eye" /></div>
        <Divider cls="ml-[3px] mr-px" />
        {minis('xbox! box! circle tri! x! stair! ibar wave!')}
        <div className="flex ml-[2px]">{minis('beam! out')}</div>
        <div className="flex ml-[2px]">{minis('sq! sqr!')}</div>
        <Combo w="w-[23px] ml-[3px]">Auto</Combo>
        <Combo w="w-[48px] ml-[7px]">Rovina pohledu</Combo>
        <Combo w="w-[51px] ml-[7px]">Obrysové roviny</Combo>
        <div className="flex ml-[7px]"><Mini n="eye" /></div>
        <Divider cls="mx-[4px]" />
        <Combo w="w-[61px]"><span>❶Počátek modelu</span></Combo>
        <div className="w-[10px] h-[12px] ml-[4px] bg-[#aaaab2] flex items-center justify-center text-[#ccc]">+</div>
        <div className="w-[10px] h-[12px] bg-[#aaaab2] ml-[1px] flex items-center justify-center"><div className="w-[4px] h-[6px] bg-[#909098]" /></div>
        <Divider cls="ml-[4px] mr-[2px]" />
        <div className="w-[74px] h-[12px] bg-white flex items-center px-[2px] italic text-[#777]">Hledat v modelu</div>
        <Search className="w-[7px] h-[7px] ml-[4px]" strokeWidth={3} />
        <Search className="w-[6px] h-[6px] ml-[5px] bg-[#d5d5da]" strokeWidth={2.5} />
    </div>
);

const StatusBar = () => (
    <div className="h-[12px] flex items-center bg-[#0063a5] text-[#dbeaf5] text-[7.400px] tracking-[-0.050px] whitespace-nowrap">
        <span className="ml-[925px] w-[53px]">O</span>
        <span className="w-[8px]">0</span>
        <span className="w-[26px] tracking-[-0.200px]">Posouv</span>
        <span className="w-[109px] tracking-[-0.100px]">Aktuální fáze: 1, Fáze 1</span>
        <span>1 objekty a 0 úchopové body vybrány</span>
    </div>
);

const Tekla = () => (
    <svg viewBox="0 0 14 14" className="w-[13px] h-[13px]">
        <path d="M1 0h12v13H1z" fill="#e9f1f7" /><path d="M2 2h4v3H4zM6 2h5v3L9 7 8 4z" fill="#0f6498" />
        <path d="M1 8h12v5H1z" fill="#8fc0dd" /><path d="M6 8h7v4H7z" fill="#2f7fae" />
    </svg>
);

const office = (bg: string, dark: string, letter: string) => (
    <div className={`w-[12px] h-[11px] ${bg} rounded-[2px] flex items-center`}>
        <div className={`w-[7px] h-[7px] ${dark} text-white text-[5px] leading-[7px] font-bold text-center`}>{letter}</div>
    </div>
);

const taskIcons: { icon: React.ReactNode; run?: string }[] = [
    { icon: <svg viewBox="0 0 12 12" className="w-[12px] h-[12px]"><path d="M0 0h5.700v5.700H0zM6.300 0H12v5.700H6.300zM0 6.300h5.700V12H0zM6.300 6.300H12V12H6.300z" fill="#5cc4f5" /></svg> },
    { icon: <Search className="w-[12px] h-[12px] text-[#e6e6e6]" strokeWidth={2.5} /> },
    { icon: <svg viewBox="0 0 12 12" className="w-[12px] h-[12px]"><path d="M0 4h8v7H0z" fill="#8c8c8c" /><path d="M3 1h9v7H3z" fill="#eee" /></svg> },
    { icon: <svg viewBox="0 0 12 12" className="w-[13px] h-[13px]"><circle cx="8" cy="2.500" r="2" fill="#7b83eb" /><path d="M4 5h8v5q-4 4-8 0z" fill="#6a70d8" /><path d="M0 3h7v7H0z" fill="#4b53bc" /><path d="M2 5h3.500M3.700 5v4M7 9h4" stroke="#fff" /></svg> },
    { icon: <svg viewBox="0 0 12 12" className="w-[12px] h-[12px]"><path d="M0 0h5.700v5.700H0z" fill="#e8502c" /><path d="M6.300 0H12v5.700H6.300z" fill="#7db928" /><path d="M0 6.300h5.700V12H0z" fill="#2aa0e0" /><path d="M6.300 6.300H12V12H6.300z" fill="#f5b81c" /></svg> },
    { icon: <svg viewBox="0 0 12 12" className="w-[12px] h-[12px]"><path d="M0 0h12v12H0z" fill="#4a5ac0" /><path d="M3 0h6v4H3z" fill="#d8def4" /><path d="M2 6h8v6H2z" fill="#f2dede" /><path d="M3 8h6M3 10h6" stroke="#c66" strokeWidth=".6" /></svg> },
    { icon: <FaEdge className="w-[12px] h-[12px] text-[#2fa4dc]" /> },
    { icon: <div className="w-[12px] h-[12px] rounded-full bg-[#e3704b] flex items-center"><div className="w-[7px] h-[7px] bg-[#b83b1d] text-white text-[5px] leading-[7px] font-bold text-center">P</div></div> },
    { icon: office('bg-[#3f8fdc]', 'bg-[#1c56ab]', 'W') },
    { icon: office('bg-[#2f9a62]', 'bg-[#107040]', 'X') },
    { icon: <svg viewBox="0 0 12 12" className="w-[12px] h-[12px]"><path d="M2 1h9v7H7l-4 4V8H2z" fill="#2b9a50" /><path d="M5 3h5v4H5z" fill="#15703a" /></svg> },
    { icon: <svg viewBox="0 0 12 12" className="w-[12px] h-[12px]"><path d="M4 1h6l2 4v6H3z" fill="#39a1e4" /><path d="M0 4h6v6H0z" fill="#1068b8" /><circle cx="3" cy="7" r="1.600" fill="none" stroke="#fff" /><path d="m6 11 6-5v5z" fill="#9ad4f4" /></svg> },
    { icon: <svg viewBox="0 0 14 14" className="w-[14px] h-[14px]"><path d="M1 13 8 6" stroke="#5b9bd2" strokeWidth="3" /><path d="M3 8l4 4" stroke="#5b9bd2" strokeWidth="2" /><circle cx="10" cy="4" r="4" fill="#79b5e8" /><path d="M10 2v4" stroke="#fff" /></svg> },
    { icon: <FaSpotify className="w-[12px] h-[12px] text-[#2ac45c]" /> },
    { icon: <Tekla />, run: 'w-[3px] bg-[#999]' },
    { icon: <Tekla />, run: 'w-[3px] bg-[#999]' },
    { icon: <div className="w-[11px] h-[10px] bg-[#f1f1ee] border border-[#777] flex items-center"><div className="w-[5px] h-[5px] bg-[#39704a]" /></div>, run: 'w-[3px] bg-[#999]' },
    { icon: <Tekla />, run: 'w-[3px] bg-[#999]' },
    { icon: <Tekla />, run: 'w-[8px] bg-[#6cc3f0]' },
];

const Taskbar = () => (
    <div className="h-[24px] flex bg-[#1c1c1c] text-[#f2f2f2] text-[5.700px]">
        <div className="flex ml-[431px]">
            {taskIcons.map((t, i) => (
                <div key={i} className={`w-[22px] h-[24px] flex flex-col items-center pt-[5px] ${i === 18 ? 'bg-[#2b2d30]' : ''}`}>
                    <div className="h-[14px] flex items-center justify-center">{t.icon}</div>
                    {t.run && <div className={`${t.run} h-[1.500px] rounded-full mt-[1.500px]`} />}
                </div>
            ))}
        </div>
        <div className="ml-auto flex items-center">
            <ChevronUp className="w-[8px] h-[8px]" strokeWidth={3} />
            <svg viewBox="0 0 8 10" className="w-[7px] h-[9px] ml-[8px]"><path d="M2 3h4v6H2zM3 3V1h2v2M4 5v2" fill="none" stroke="#eee" strokeWidth="1" /></svg>
            <Cloud className="w-[9px] h-[9px] ml-[8px]" fill="#eee" />
            <Cloud className="w-[9px] h-[9px] ml-[7px] text-[#2e8fd0]" fill="#2e8fd0" />
            <div className="w-[7px] h-[8px] ml-[8px] bg-[#a89f72] border border-[#cfc9a8]" />
            <div className="w-[16px] h-[20px] ml-[5px] rounded-[2px] bg-[#4cb8f0] flex items-center justify-center">
                <Mic className="w-[9px] h-[9px] text-[#111]" strokeWidth={3} />
            </div>
            <span className="ml-[6px] w-[12px]">CES</span>
            <MonitorSmartphone className="w-[8px] h-[8px] ml-[8px]" strokeWidth={2.500} />
            <Volume2 className="w-[7px] h-[7px] ml-[4px]" strokeWidth={2.500} />
            <Battery className="w-[9px] h-[9px] ml-[5px]" fill="#eee" strokeWidth={2.500} />
            <div className="ml-[6px] w-[30px] text-right leading-[8px] tracking-[-0.100px]">9:14<br />22.02.2024</div>
            <Bell className="w-[7px] h-[7px] ml-[4px] mr-[11px]" strokeWidth={2.500} />
        </div>
    </div>
);

const App: React.FC = () => (
    <div className="w-[1280px] h-[720px] overflow-hidden bg-[#f3f2f7] font-['Open_Sans','Noto_Sans',sans-serif] relative flex flex-col">
        <TitleBar />
        <div className="flex h-[53px]">
            <div className="w-[16px] shrink-0 bg-[#0063a3] flex items-center justify-center text-white">
                <Menu className="w-[6px] h-[6px]" strokeWidth={3} />
            </div>
            <div className="flex-1 min-w-0">
                <TabRow />
                <Ribbon />
            </div>
        </div>
        <Workspace />
        <SnapBar />
        <StatusBar />
        <Taskbar />
    </div>
);

export default App;
